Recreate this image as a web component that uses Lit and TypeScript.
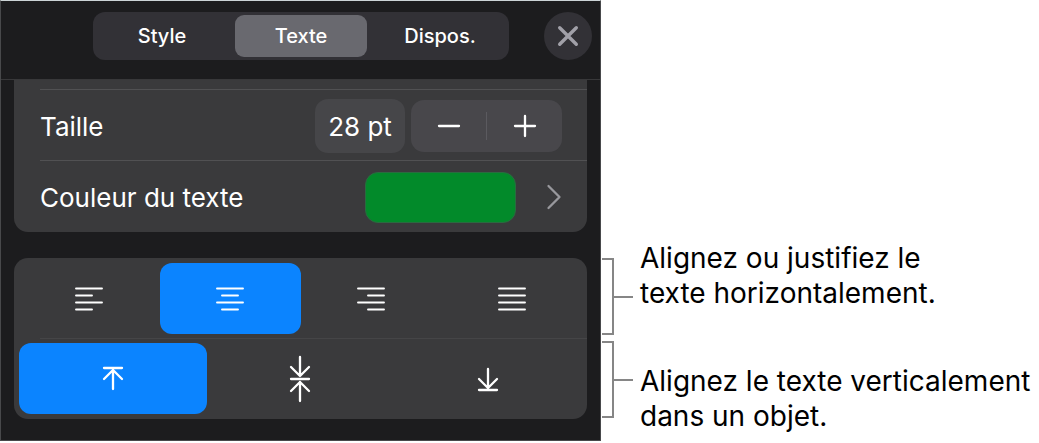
import { LitElement, html, css, svg } from "lit";
import { customElement, state } from "lit/decorators.js";

const H_ALIGN = [
  { id: "left", label: "Aligner à gauche", d: "M1 1.5h26M1 8.5h16M1 15.5h26M1 22.5h16" },
  { id: "center", label: "Centrer", d: "M1 1.5h26M6 8.5h16M1 15.5h26M6 22.5h16" },
  { id: "right", label: "Aligner à droite", d: "M1 1.5h26M11 8.5h16M1 15.5h26M11 22.5h16" },
  { id: "justify", label: "Justifier", d: "M1 1.5h26M1 8.5h26M1 15.5h26M1 22.5h26" },
];

const V_ALIGN = [
  { id: "top", label: "Aligner en haut", d: "M3 13h18M12 15v19M3 24l9-9 9 9" },
  { id: "middle", label: "Aligner au milieu", d: "M3 24h18M12 2v19M3 12l9 9 9-9M12 46V27M3 36l9-9 9 9" },
  { id: "bottom", label: "Aligner en bas", d: "M3 35h18M12 14v19M3 24l9 9 9-9" },
];

@customElement("app-root")
export class AppRoot extends LitElement {
  @state() private tab = "Texte";
  @state() private horizontal = "center";
  @state() private vertical = "top";
  @state() private size = 28;

  static styles = css`
    :host {
      display: block;
      background: #fff;
      color: #000;
      font-family: Inter, "Liberation Sans", sans-serif;
      font-size: 26px;
      line-height: 35px;
    }
    * { box-sizing: border-box; }
    button, input {
      font: inherit;
      color: inherit;
      margin: 0;
      padding: 0;
      border: 0;
      background: none;
    }
    button { cursor: pointer; }
    svg {
      display: block;
      fill: none;
      stroke: currentColor;
      stroke-linecap: round;
      stroke-linejoin: round;
    }
    .page {
      display: grid;
      grid-template-columns: 601fr 438fr;
      align-items: start;
    }
    .panel {
      background: #1c1c1e;
      color: #fff;
      border: 1px solid #48494b;
      border-top-color: #ccd4d6;
      padding-bottom: 21px;
    }
    .header {
      display: flex;
      align-items: center;
      padding: 11px 8px 19px 92px;
      border-bottom: 1px solid #38383a;
    }
    .tabs {
      flex: 1;
      display: grid;
      grid-template-columns: repeat(3, 1fr);
      gap: 7px;
      padding: 3px;
      margin-right: 35px;
      border-radius: 12px;
      background: #323136;
    }
    .tab {
      height: 42px;
      border-radius: 9px;
      font-size: 20px;
      line-height: 26px;
      font-weight: 500;
    }
    .tab.on { background: #69696f; }
    .close {
      display: grid;
      place-items: center;
      width: 48px;
      height: 48px;
      border-radius: 50%;
      background: #323136;
      color: #a1a0a8;
    }
    .card {
      margin: 0 13px;
      border-radius: 14px;
      background: #3a3a3c;
    }
    .card.cut {
      padding: 9px 0 1px;
      border-radius: 0 0 14px 14px;
      margin-bottom: 26px;
    }
    .row {
      display: flex;
      align-items: center;
      justify-content: space-between;
      height: 71px;
      margin-left: 26px;
      padding: 2px 25px 0 0;
      border-top: 1px solid #515153;
    }
    .controls {
      display: flex;
      align-items: center;
      gap: 6px;
    }
    .size {
      width: 90px;
      height: 54px;
      border-radius: 13px;
      background: #464649;
      text-align: center;
    }
    .stepper {
      display: flex;
      align-items: center;
      height: 52px;
      border-radius: 13px;
      background: #48474b;
    }
    .step {
      display: grid;
      place-items: center;
      width: 75px;
      height: 52px;
    }
    .split {
      width: 1px;
      height: 28px;
      background: #5b5a5f;
    }
    .color {
      display: flex;
      align-items: center;
      gap: 30px;
      color: #98989d;
    }
    .swatch {
      width: 151px;
      height: 51px;
      border: 1px solid #2a6b40;
      border-radius: 13px;
      background: #028a2a;
    }
    .group {
      display: grid;
      grid-auto-flow: column;
      grid-auto-columns: 1fr;
      padding: 5px 5px 4px;
    }
    .rule + .group { padding: 4px 5px 5px; }
    .rule {
      height: 1px;
      margin-left: 26px;
      background: #454547;
    }
    .choice {
      display: grid;
      place-items: center;
      height: 71px;
      border-radius: 12px;
    }
    .choice.on { background: #0b84ff; }
    .notes {
      display: flex;
      gap: 7px;
      padding-left: 1px;
      font-size: 28px;
    }
    .brackets {
      display: flex;
      flex-direction: column;
      gap: 6px;
      padding-top: 258px;
    }
    .bracket {
      display: flex;
      align-items: center;
    }
    .hook {
      width: 12px;
      height: 77px;
      border: 2px solid #868686;
      border-left: 0;
    }
    .stem {
      width: 19px;
      height: 2px;
      background: #868686;
    }
    .texts {
      display: flex;
      flex-direction: column;
      gap: 53px;
      padding-top: 241px;
      white-space: nowrap;
    }
    .note { margin: 0; }
    .line { display: block; }
  `;

  private onSize(e: Event) {
    const n = parseInt((e.target as HTMLInputElement).value, 10);
    if (n > 0) this.size = n;
  }

  private choice(item: { id: string; label: string; d: string }, on: boolean, pick: () => void, w: number, h: number) {
    return html`<button type="button" class="choice ${on ? "on" : ""}" aria-label=${item.label}
      aria-pressed=${on ? "true" : "false"} @click=${pick}>
      <svg width=${w} height=${h} viewBox="0 0 ${w} ${h}" stroke-width=${w === 28 ? 1.9 : 2.3} aria-hidden="true">${svg`<path d=${item.d} />`}</svg>
    </button>`;
  }

  render() {
    return html`
      <main class="page">
        <section class="panel">
          <header class="header">
            <nav class="tabs">
              ${["Style", "Texte", "Dispos."].map((t) => html`<button type="button"
                class="tab ${t === this.tab ? "on" : ""}" @click=${() => (this.tab = t)}>${t}</button>`)}
            </nav>
            <button type="button" class="close" aria-label="Fermer">
              <svg width="22" height="22" viewBox="0 0 22 22" stroke-width="3.4" aria-hidden="true"><path d="M2.700 2.700l16.600 16.600M19.300 2.700l-16.600 16.600" /></svg>
            </button>
          </header>

          <div class="card cut">
            <div class="row">
              <label for="size">Taille</label>
              <div class="controls">
                <input id="size" class="size" type="text" .value=${`${this.size} pt`} @change=${this.onSize} />
                <div class="stepper">
                  <button type="button" class="step" aria-label="Réduire" @click=${() => (this.size = Math.max(1, this.size - 1))}>
                    <svg width="24" height="24" viewBox="0 0 24 24" stroke-width="2.3" aria-hidden="true"><path d="M2 12h20" /></svg>
                  </button>
                  <span class="split"></span>
                  <button type="button" class="step" aria-label="Augmenter" @click=${() => (this.size += 1)}>
                    <svg width="24" height="24" viewBox="0 0 24 24" stroke-width="2.3" aria-hidden="true"><path d="M2 12h20M12 2v20" /></svg>
                  </button>
                </div>
              </div>
            </div>
            <div class="row">
              <label for="color">Couleur du texte</label>
              <button type="button" id="color" class="color">
                <span class="swatch"></span>
                <svg width="16" height="26" viewBox="0 0 16 26" stroke-width="2.3" aria-hidden="true"><path d="M2.500 2L13.500 13 2.500 24" /></svg>
              </button>
            </div>
          </div>

          <div class="card">
            <div class="group" role="group" aria-label="Alignement horizontal">
              ${H_ALIGN.map((a) => this.choice(a, a.id === this.horizontal, () => (this.horizontal = a.id), 28, 24))}
            </div>
            <div class="rule"></div>
            <div class="group" role="group" aria-label="Alignement vertical">
              ${V_ALIGN.map((a) => this.choice(a, a.id === this.vertical, () => (this.vertical = a.id), 24, 48))}
            </div>
          </div>
        </section>

        <aside class="notes">
          <div class="brackets">
            <div class="bracket"><span class="hook"></span><span class="stem"></span></div>
            <div class="bracket"><span class="hook"></span><span class="stem"></span></div>
          </div>
          <div class="texts">
            <p class="note"><span class="line">Alignez ou justifiez le</span><span class="line">texte horizontalement.</span></p>
            <p class="note"><span class="line">Alignez le texte verticalement</span><span class="line">dans un objet.</span></p>
          </div>
        </aside>
      </main>
    `;
  }
}
